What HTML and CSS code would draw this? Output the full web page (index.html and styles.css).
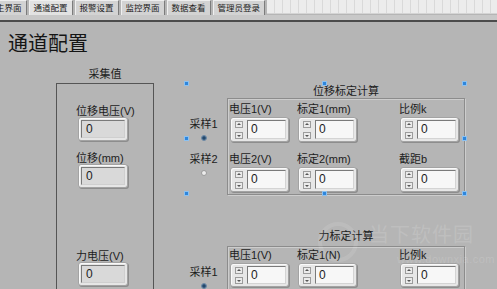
FILE: index.html
```html
<!DOCTYPE html>
<html lang="zh-CN">
<head>
	<meta charset="UTF-8">
	<title>通道配置</title>
	<link rel="stylesheet" href="styles.css">
</head>
<body>
	<div class="tabbar">
		<div class="tabs">
			<div class="tab">主界面</div>
			<div class="tab active">通道配置</div>
			<div class="tab">报警设置</div>
			<div class="tab">监控界面</div>
			<div class="tab">数据查看</div>
			<div class="tab">管理员登录</div>
		</div>
		<div class="grid-fill"></div>
	</div>
	<div class="tab-band"></div>

	<h1 class="page-title">通道配置</h1>

	<div class="panel">
		<!-- 采集值 -->
		<div class="acq">
			<div class="caption">采集值</div>
			<div class="acq-box">
				<div class="field">
					<div class="label">位移电压(V)</div>
					<div class="indicator"><span>0</span></div>
				</div>
				<div class="field">
					<div class="label">位移(mm)</div>
					<div class="indicator"><span>0</span></div>
				</div>
				<div class="field far">
					<div class="label">力电压(V)</div>
					<div class="indicator"><span>0</span></div>
				</div>
			</div>
		</div>

		<div class="clusters">
			<!-- 位移标定计算（选中状态） -->
			<div class="cluster selected">
				<span class="handle h-tl"></span>
				<span class="handle h-tc"></span>
				<span class="handle h-tr"></span>
				<span class="handle h-ml"></span>
				<span class="handle h-mr"></span>
				<span class="handle h-bl"></span>
				<span class="handle h-bc"></span>
				<span class="handle h-br"></span>

				<div class="radios">
					<div class="radio-label">采样1</div>
					<span class="radio on"></span>
					<div class="radio-label second-opt">采样2</div>
					<span class="radio"></span>
				</div>
				<div class="group">
					<div class="group-title">位移标定计算</div>
					<div class="group-box">
						<div class="cell">
							<div class="label">电压1(V)</div>
							<div class="numeric"><div class="spin"><i class="up"></i><i class="down"></i></div><div class="num-field">0</div></div>
						</div>
						<div class="cell">
							<div class="label">标定1(mm)</div>
							<div class="numeric"><div class="spin"><i class="up"></i><i class="down"></i></div><div class="num-field">0</div></div>
						</div>
						<div class="cell">
							<div class="label">比例k</div>
							<div class="numeric"><div class="spin"><i class="up"></i><i class="down"></i></div><div class="num-field">0</div></div>
						</div>
						<div class="cell">
							<div class="label">电压2(V)</div>
							<div class="numeric"><div class="spin"><i class="up"></i><i class="down"></i></div><div class="num-field">0</div></div>
						</div>
						<div class="cell">
							<div class="label">标定2(mm)</div>
							<div class="numeric"><div class="spin"><i class="up"></i><i class="down"></i></div><div class="num-field">0</div></div>
						</div>
						<div class="cell">
							<div class="label">截距b</div>
							<div class="numeric"><div class="spin"><i class="up"></i><i class="down"></i></div><div class="num-field">0</div></div>
						</div>
					</div>
				</div>
			</div>

			<!-- 力标定计算 -->
			<div class="cluster force">
				<div class="radios">
					<div class="radio-label">采样1</div>
					<span class="radio on"></span>
				</div>
				<div class="group">
					<div class="group-title">力标定计算</div>
					<div class="group-box">
						<div class="cell">
							<div class="label">电压1(V)</div>
							<div class="numeric"><div class="spin"><i class="up"></i><i class="down"></i></div><div class="num-field">0</div></div>
						</div>
						<div class="cell">
							<div class="label">标定1(N)</div>
							<div class="numeric"><div class="spin"><i class="up"></i><i class="down"></i></div><div class="num-field">0</div></div>
						</div>
						<div class="cell">
							<div class="label">比例k</div>
							<div class="numeric"><div class="spin"><i class="up"></i><i class="down"></i></div><div class="num-field">0</div></div>
						</div>
					</div>
				</div>
			</div>
		</div>
	</div>

	<!-- 水印 -->
	<div class="wm-ring"></div>
	<div class="wm-title">当下软件园</div>
	<div class="wm-url">www.downxia.com</div>
</body>
</html>
```

FILE: styles.css
```css
* {
	margin: 0;
	padding: 0;
	box-sizing: border-box;
}
body {
	width: 497px;
	height: 289px;
	overflow: hidden;
	position: relative;
	background-color: #b5b5b5;
	color: #1c1c1c;
	font-family: "Liberation Sans", "Noto Sans CJK SC", sans-serif;
	font-size: 11px;
}

/* 顶部选项卡 */
.tabbar {
	display: flex;
	height: 15px;
}
.tabs {
	display: flex;
	margin-left: -9px;
}
.tab {
	height: 15px;
	padding: 0 4px;
	margin-right: 2px;
	font-size: 8.5px;
	line-height: 15px;
	color: #222;
	background-color: #d3d3d3;
	border-left: 1px solid #efefef;
	border-right: 1px solid #7c7c7c;
	border-top: 1px solid #efefef;
	white-space: nowrap;
}
.tab.active {
	background-color: #e2e2e2;
}
.grid-fill {
	flex: 1;
	height: 14px;
	background-color: #ececec;
	background-image: repeating-linear-gradient(90deg, transparent 0, transparent 7px, #d9d9d9 7px, #d9d9d9 8px);
	border-bottom: 1px solid #d4d4d4;
}
.tab-band {
	height: 7px;
	background-color: #c8c8c8;
	border-bottom: 2px solid #4c4c4c;
}

.page-title {
	margin: 9px 0 0 8px;
	font-size: 20px;
	font-weight: normal;
	line-height: 24px;
	color: #151515;
	font-family: "Noto Sans CJK SC", sans-serif;
}

.panel {
	display: flex;
	align-items: flex-start;
	margin-top: 7px;
	padding-left: 56px;
}

/* 采集值 */
.acq {
	width: 98px;
}
.caption {
	padding-top: 4px;
	margin-bottom: 1px;
	line-height: 16px;
	text-align: center;
}
.acq-box {
	height: 206px;
	border: 1px solid #555;
	border-bottom: none;
	padding: 21px 0 0 19px;
	display: flex;
	flex-direction: column;
	gap: 11px;
}
.field.far {
	margin-top: 51px;
}
.label {
	line-height: 12px;
	white-space: nowrap;
}
.indicator {
	width: 50px;
	height: 24px;
	margin-left: 2px;
	padding: 2px;
	background-color: #e6e6e6;
	border: 1px solid #a3a3a3;
	border-radius: 3px;
	box-shadow: inset 1px 1px 0 #fafafa, 1px 1px 0 #8d8d8d;
}
.indicator span {
	display: block;
	height: 100%;
	padding-left: 4px;
	line-height: 16px;
	font-size: 12px;
	background-color: #d9d9d9;
	border: 1px solid;
	border-color: #7a7a7a #cfcfcf #cfcfcf #7a7a7a;
}

/* 簇 */
.clusters {
	margin: 21px 0 0 31px;
}
.cluster {
	display: flex;
	position: relative;
	width: 280px;
}
.cluster.force {
	margin-top: 33px;
}
.radios {
	width: 37px;
	padding-top: 35px;
	display: flex;
	flex-direction: column;
	align-items: center;
}
.force .radios {
	padding-top: 38px;
}
.radio-label {
	line-height: 13px;
	white-space: nowrap;
}
.radio-label.second-opt {
	margin-top: 12px;
}
.radio {
	display: block;
	width: 6px;
	height: 6px;
	margin-top: 4px;
	border-radius: 50%;
	background-color: #ececec;
	border: 1px solid #9a9a9a;
}
.radio.on {
	background: radial-gradient(circle, #24486c 0, #24486c 45%, #7d9dbd 100%);
	border-color: #6684a3;
}

.group {
	width: 238px;
	margin-left: 5px;
}
.group-title {
	padding-top: 2px;
	line-height: 13px;
	text-align: center;
}
.force .group-title {
	padding-bottom: 3px;
}
.group-box {
	display: grid;
	grid-template-columns: 68px 102px 59px;
	row-gap: 11px;
	padding: 4px 0 2px 2px;
	border: 1px solid #8c8c8c;
	box-shadow: inset 1px 1px 0 #cdcdcd, 1px 1px 0 #cdcdcd;
}
.force .group-box {
	padding-top: 2px;
	height: 43px;
	border-bottom: none;
}
.cell .label {
	margin-left: -1px;
}

/* 数值输入控件 */
.numeric {
	display: flex;
	width: 59px;
	height: 25px;
	margin-top: 2px;
	padding: 2px;
	background-color: #e7e7e7;
	border: 1px solid #a3a3a3;
	border-radius: 3px;
	box-shadow: inset 1px 1px 0 #fafafa, 1px 1px 0 #8d8d8d;
}
.force .numeric {
	height: 24px;
}
.spin {
	width: 11px;
	display: flex;
	flex-direction: column;
	justify-content: space-between;
	padding: 1px 0 0 2px;
}
.spin i {
	position: relative;
	display: block;
	width: 8px;
	height: 7px;
	background-color: #ebebeb;
	border: 1px solid #9c9c9c;
}
.spin i:after {
	content: "";
	position: absolute;
	left: 1px;
	width: 0;
	height: 0;
	border-left: 2px solid transparent;
	border-right: 2px solid transparent;
}
.spin .up:after {
	top: 1px;
	border-bottom: 2px solid #555;
}
.spin .down:after {
	top: 2px;
	border-top: 2px solid #555;
}
.num-field {
	flex: 1;
	margin-left: 3px;
	padding-left: 3px;
	font-size: 12px;
	line-height: 17px;
	background-color: #f7f7f7;
	border: 1px solid;
	border-color: #7a7a7a #d4d4d4 #d4d4d4 #7a7a7a;
}

/* 选中手柄 */
.handle {
	position: absolute;
	width: 5px;
	height: 5px;
	background-color: #2f86dc;
	border: 1px solid #8cc1f0;
}
.h-tl { left: -1px; top: -2px; }
.h-tc { left: 137px; top: -2px; }
.h-tr { left: 277px; top: -2px; }
.h-ml { left: -1px; top: 53px; }
.h-mr { left: 277px; top: 53px; }
.h-bl { left: -1px; top: 108px; }
.h-bc { left: 137px; top: 108px; }
.h-br { left: 277px; top: 108px; }

/* 水印 */
.wm-title {
	position: absolute;
	left: 369px;
	top: 219px;
	font-family: "Noto Sans CJK SC", sans-serif;
	font-size: 20px;
	letter-spacing: 1px;
	color: rgba(255, 255, 255, 0.14);
}
.wm-url {
	position: absolute;
	left: 397px;
	top: 253px;
	font-size: 11px;
	letter-spacing: 0.5px;
	color: rgba(255, 255, 255, 0.15);
}
.wm-ring {
	position: absolute;
	left: 318px;
	top: 222px;
	width: 40px;
	height: 40px;
	border-radius: 50%;
	border: 4px solid rgba(255, 255, 255, 0.1);
}
```
